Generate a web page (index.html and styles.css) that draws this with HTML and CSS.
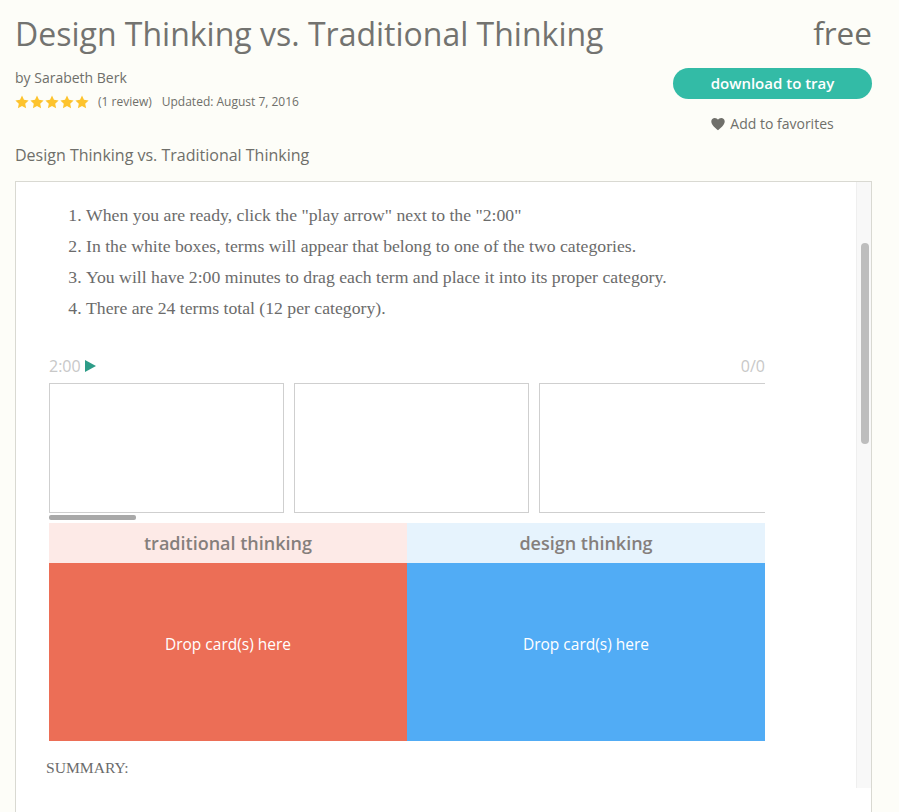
FILE: index.html
```html
<!DOCTYPE html>
<html lang="en">
<head>
    <meta charset="UTF-8">
    <meta name="viewport" content="width=device-width, initial-scale=1.0">
    <title>Design Thinking vs. Traditional Thinking</title>
    <link rel="stylesheet" href="styles.css">
</head>
<body>

    <div class="product-header">
        <div class="product-info">
            <h1>Design Thinking vs. Traditional Thinking</h1>
            <div class="author">by Sarabeth Berk</div>
            <div class="meta">
                <span class="stars">
                    <svg viewBox="0 0 24 24"><path d="M12 1l3.4 7.3 7.9 1-5.8 5.5 1.5 7.9-7-3.9-7 3.9 1.5-7.9L.7 9.3l7.9-1z"/></svg>
                    <svg viewBox="0 0 24 24"><path d="M12 1l3.4 7.3 7.9 1-5.8 5.5 1.5 7.9-7-3.9-7 3.9 1.5-7.9L.7 9.3l7.9-1z"/></svg>
                    <svg viewBox="0 0 24 24"><path d="M12 1l3.4 7.3 7.9 1-5.8 5.5 1.5 7.9-7-3.9-7 3.9 1.5-7.9L.7 9.3l7.9-1z"/></svg>
                    <svg viewBox="0 0 24 24"><path d="M12 1l3.4 7.3 7.9 1-5.8 5.5 1.5 7.9-7-3.9-7 3.9 1.5-7.9L.7 9.3l7.9-1z"/></svg>
                    <svg viewBox="0 0 24 24"><path d="M12 1l3.4 7.3 7.9 1-5.8 5.5 1.5 7.9-7-3.9-7 3.9 1.5-7.9L.7 9.3l7.9-1z"/></svg>
                </span>
                <span>(1 review)</span>
                <span>Updated: August 7, 2016</span>
            </div>
        </div>
        <div class="product-actions">
            <div class="price">free</div>
            <button type="button" class="download-btn">download to tray</button>
            <div class="favorite">
                <svg viewBox="0 0 24 24"><path d="M12 22.5C8 19 .5 13.6.5 7.6.5 4 3.200 1.500 6.500 1.500c2.300 0 4.300 1.200 5.500 3.200 1.200-2 3.200-3.200 5.500-3.200 3.300 0 6 2.500 6 6.100 0 6-7.500 11.400-11.500 14.900z"/></svg>
                <span>Add to favorites</span>
            </div>
        </div>
    </div>

    <p class="subtitle">Design Thinking vs. Traditional Thinking</p>

    <div class="frame">
        <ol class="steps">
            <li>When you are ready, click the "play arrow" next to the "2:00"</li>
            <li>In the white boxes, terms will appear that belong to one of the two categories.</li>
            <li>You will have 2:00 minutes to drag each term and place it into its proper category.</li>
            <li>There are 24 terms total (12 per category).</li>
        </ol>

        <div class="game">
            <div class="game-top">
                <div class="timer">2:00 <span class="play-arrow"></span></div>
                <div class="score">0/0</div>
            </div>
            <div class="cards">
                <div class="card"></div>
                <div class="card"></div>
                <div class="card"></div>
            </div>
            <div class="cards-scroll"><div class="cards-thumb"></div></div>
            <div class="categories">
                <div class="category">
                    <div class="category-title title-red">traditional thinking</div>
                    <div class="drop-zone zone-red">Drop card(s) here</div>
                </div>
                <div class="category">
                    <div class="category-title title-blue">design thinking</div>
                    <div class="drop-zone zone-blue">Drop card(s) here</div>
                </div>
            </div>
        </div>

        <p class="summary">SUMMARY:</p>

        <div class="frame-scroll"><div class="frame-thumb"></div></div>
    </div>

</body>
</html>
```

FILE: styles.css
```css
html, body {
    height: 812px;
    overflow: hidden;
}
body {
    font-family: "Open Sans", sans-serif;
    background-color: #fdfdf8;
    color: #6f6f6a;
    margin: 0;
    padding: 0 27px 0 15px;
}
.product-header {
    display: flex;
    justify-content: space-between;
}
h1 {
    font-size: 32px;
    font-weight: 400;
    line-height: 45px;
    margin: 11px 0 0;
    color: #737370;
}
.author {
    font-size: 14px;
    line-height: 20px;
    margin-top: 12px;
}
.meta {
    display: flex;
    align-items: center;
    gap: 10px;
    font-size: 12px;
    line-height: 18px;
    margin-top: 5px;
}
.stars {
    display: flex;
    gap: 1px;
    margin-right: -1px;
}
.stars svg {
    width: 14px;
    height: 14px;
    fill: #fdc32d;
}
.product-actions {
    width: 199px;
    text-align: center;
}
.price {
    font-size: 31.5px;
    line-height: 42px;
    margin: 12px 0 14px;
    text-align: right;
}
.download-btn {
    display: block;
    width: 100%;
    height: 31px;
    padding: 0 0 2px;
    border: none;
    border-radius: 16px;
    background-color: #33bba6;
    color: #fff;
    font-family: "Open Sans", sans-serif;
    font-size: 15px;
    font-weight: 600;
}
.favorite {
    display: flex;
    justify-content: center;
    align-items: center;
    gap: 5px;
    font-size: 14px;
    line-height: 20px;
    margin-top: 15px;
}
.favorite svg {
    width: 14px;
    height: 14px;
    fill: #6f6f6a;
}
.subtitle {
    font-size: 16px;
    line-height: 22px;
    margin: 10px 0 0;
}
.frame {
    position: relative;
    height: 640px;
    margin-top: 15px;
    background: #fff;
    border: 1px solid #d9d9d2;
    border-bottom: none;
    box-sizing: border-box;
    overflow: hidden;
}
.steps {
    font-family: "Liberation Serif", serif;
    font-size: 17.7px;
    line-height: 31px;
    margin: 18px 0 0;
    padding-left: 70px;
    color: #6b6b6b;
}
.game {
    width: 716px;
    margin: 27px 0 0 33px;
}
.game-top {
    display: flex;
    justify-content: space-between;
    align-items: center;
    height: 30px;
    padding-bottom: 2px;
    font-size: 16px;
    color: #c8c8c8;
}
.timer {
    display: flex;
    align-items: center;
    gap: 4px;
}
.play-arrow {
    width: 0;
    height: 0;
    border-left: 11px solid #2d9c88;
    border-top: 6px solid transparent;
    border-bottom: 6px solid transparent;
}
.cards {
    display: flex;
    gap: 10px;
    overflow: hidden;
}
.card {
    flex: 0 0 235px;
    height: 130px;
    box-sizing: border-box;
    background: #fff;
    border: 1px solid #cfcfcf;
}
.cards-scroll {
    height: 10px;
    padding-top: 2px;
    box-sizing: border-box;
}
.cards-thumb {
    width: 87px;
    height: 5px;
    border-radius: 2px;
    background: #a9a9a9;
}
.categories {
    display: flex;
}
.category {
    flex: 1;
}
.category-title {
    height: 40px;
    line-height: 40px;
    text-align: center;
    font-size: 18px;
    font-weight: 600;
    color: #857f7c;
}
.title-red {
    background: #fdeae7;
}
.title-blue {
    background: #e6f3fd;
}
.drop-zone {
    height: 178px;
    line-height: 162px;
    text-align: center;
    font-size: 15.5px;
    color: #fff;
}
.zone-red {
    background: #ec6e56;
}
.zone-blue {
    background: #51acf5;
}
.summary {
    font-family: "Liberation Serif", serif;
    font-size: 15.6px;
    line-height: 20px;
    margin: 17px 0 0 30px;
    color: #6b6b6b;
}
.frame-scroll {
    position: absolute;
    top: 0;
    right: 0;
    width: 14px;
    height: 606px;
    background: #f8f8f8;
    border-left: 1px solid #efefef;
}
.frame-thumb {
    width: 8px;
    height: 201px;
    margin: 61px 0 0 4px;
    border-radius: 4px;
    background: #bdbdbd;
}
```
